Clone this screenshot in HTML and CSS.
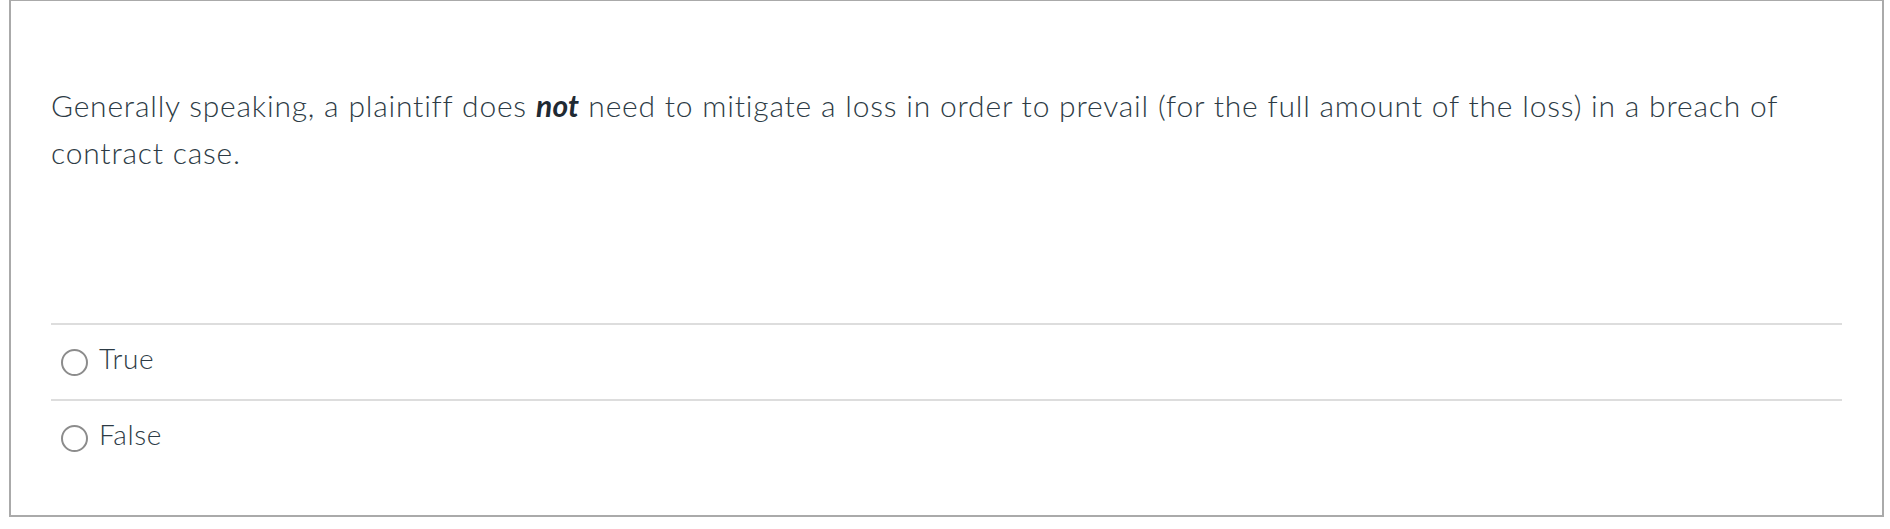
FILE: index.html
```html
<!DOCTYPE html>
<html lang="en">
<head>
<meta charset="utf-8">
<title>Quiz question</title>
<link rel="stylesheet" href="styles.css">
</head>
<body>
<div class="question">
  <div class="question-text">Generally speaking, a plaintiff does <strong><em>not</em></strong> need to mitigate a loss in order to prevail (for the full amount of the loss) in a breach of contract case.</div>
  <div class="answers">
    <label class="answer"><span class="radio"></span><span class="answer-label">True</span></label>
    <label class="answer"><span class="radio"></span><span class="answer-label">False</span></label>
  </div>
</div>
</body>
</html>
```

FILE: styles.css
```css
html, body {
  margin: 0;
  padding: 0;
  background: #ffffff;
}

body {
  font-family: "Lato Light", Lato, "Open Sans", "Liberation Sans", sans-serif;
  font-weight: 300;
  color: #2d3b45;
}

.question {
  margin-left: 9px;
  width: 1875px;
  height: 517px;
  box-sizing: border-box;
  border: 2px solid #aaaaaa;
  border-top-width: 1px;
  padding: 0 40px;
}

.question-text {
  font-size: 30px;
  letter-spacing: 0.8px;
  line-height: 46.6px;
  padding-top: 81px;
  height: 241px;
}

.question-text strong {
  font-family: Lato, "Open Sans", sans-serif;
  font-weight: 700;
  letter-spacing: 0.3px;
  color: #1f2a33;
}

.answers {
  display: flex;
  flex-direction: column;
}

.answer {
  display: flex;
  align-items: center;
  gap: 11px;
  height: 66px;
  padding: 0 0 8px 10px;
  border-top: 2px solid #dddddd;
  font-size: 28px;
  letter-spacing: 0.6px;
}

.radio {
  width: 23px;
  height: 23px;
  border: 2.5px solid #8c8c8c;
  border-radius: 50%;
  flex: none;
  margin-top: 9px;
}

.answer-label {
  line-height: 40px;
}
```
